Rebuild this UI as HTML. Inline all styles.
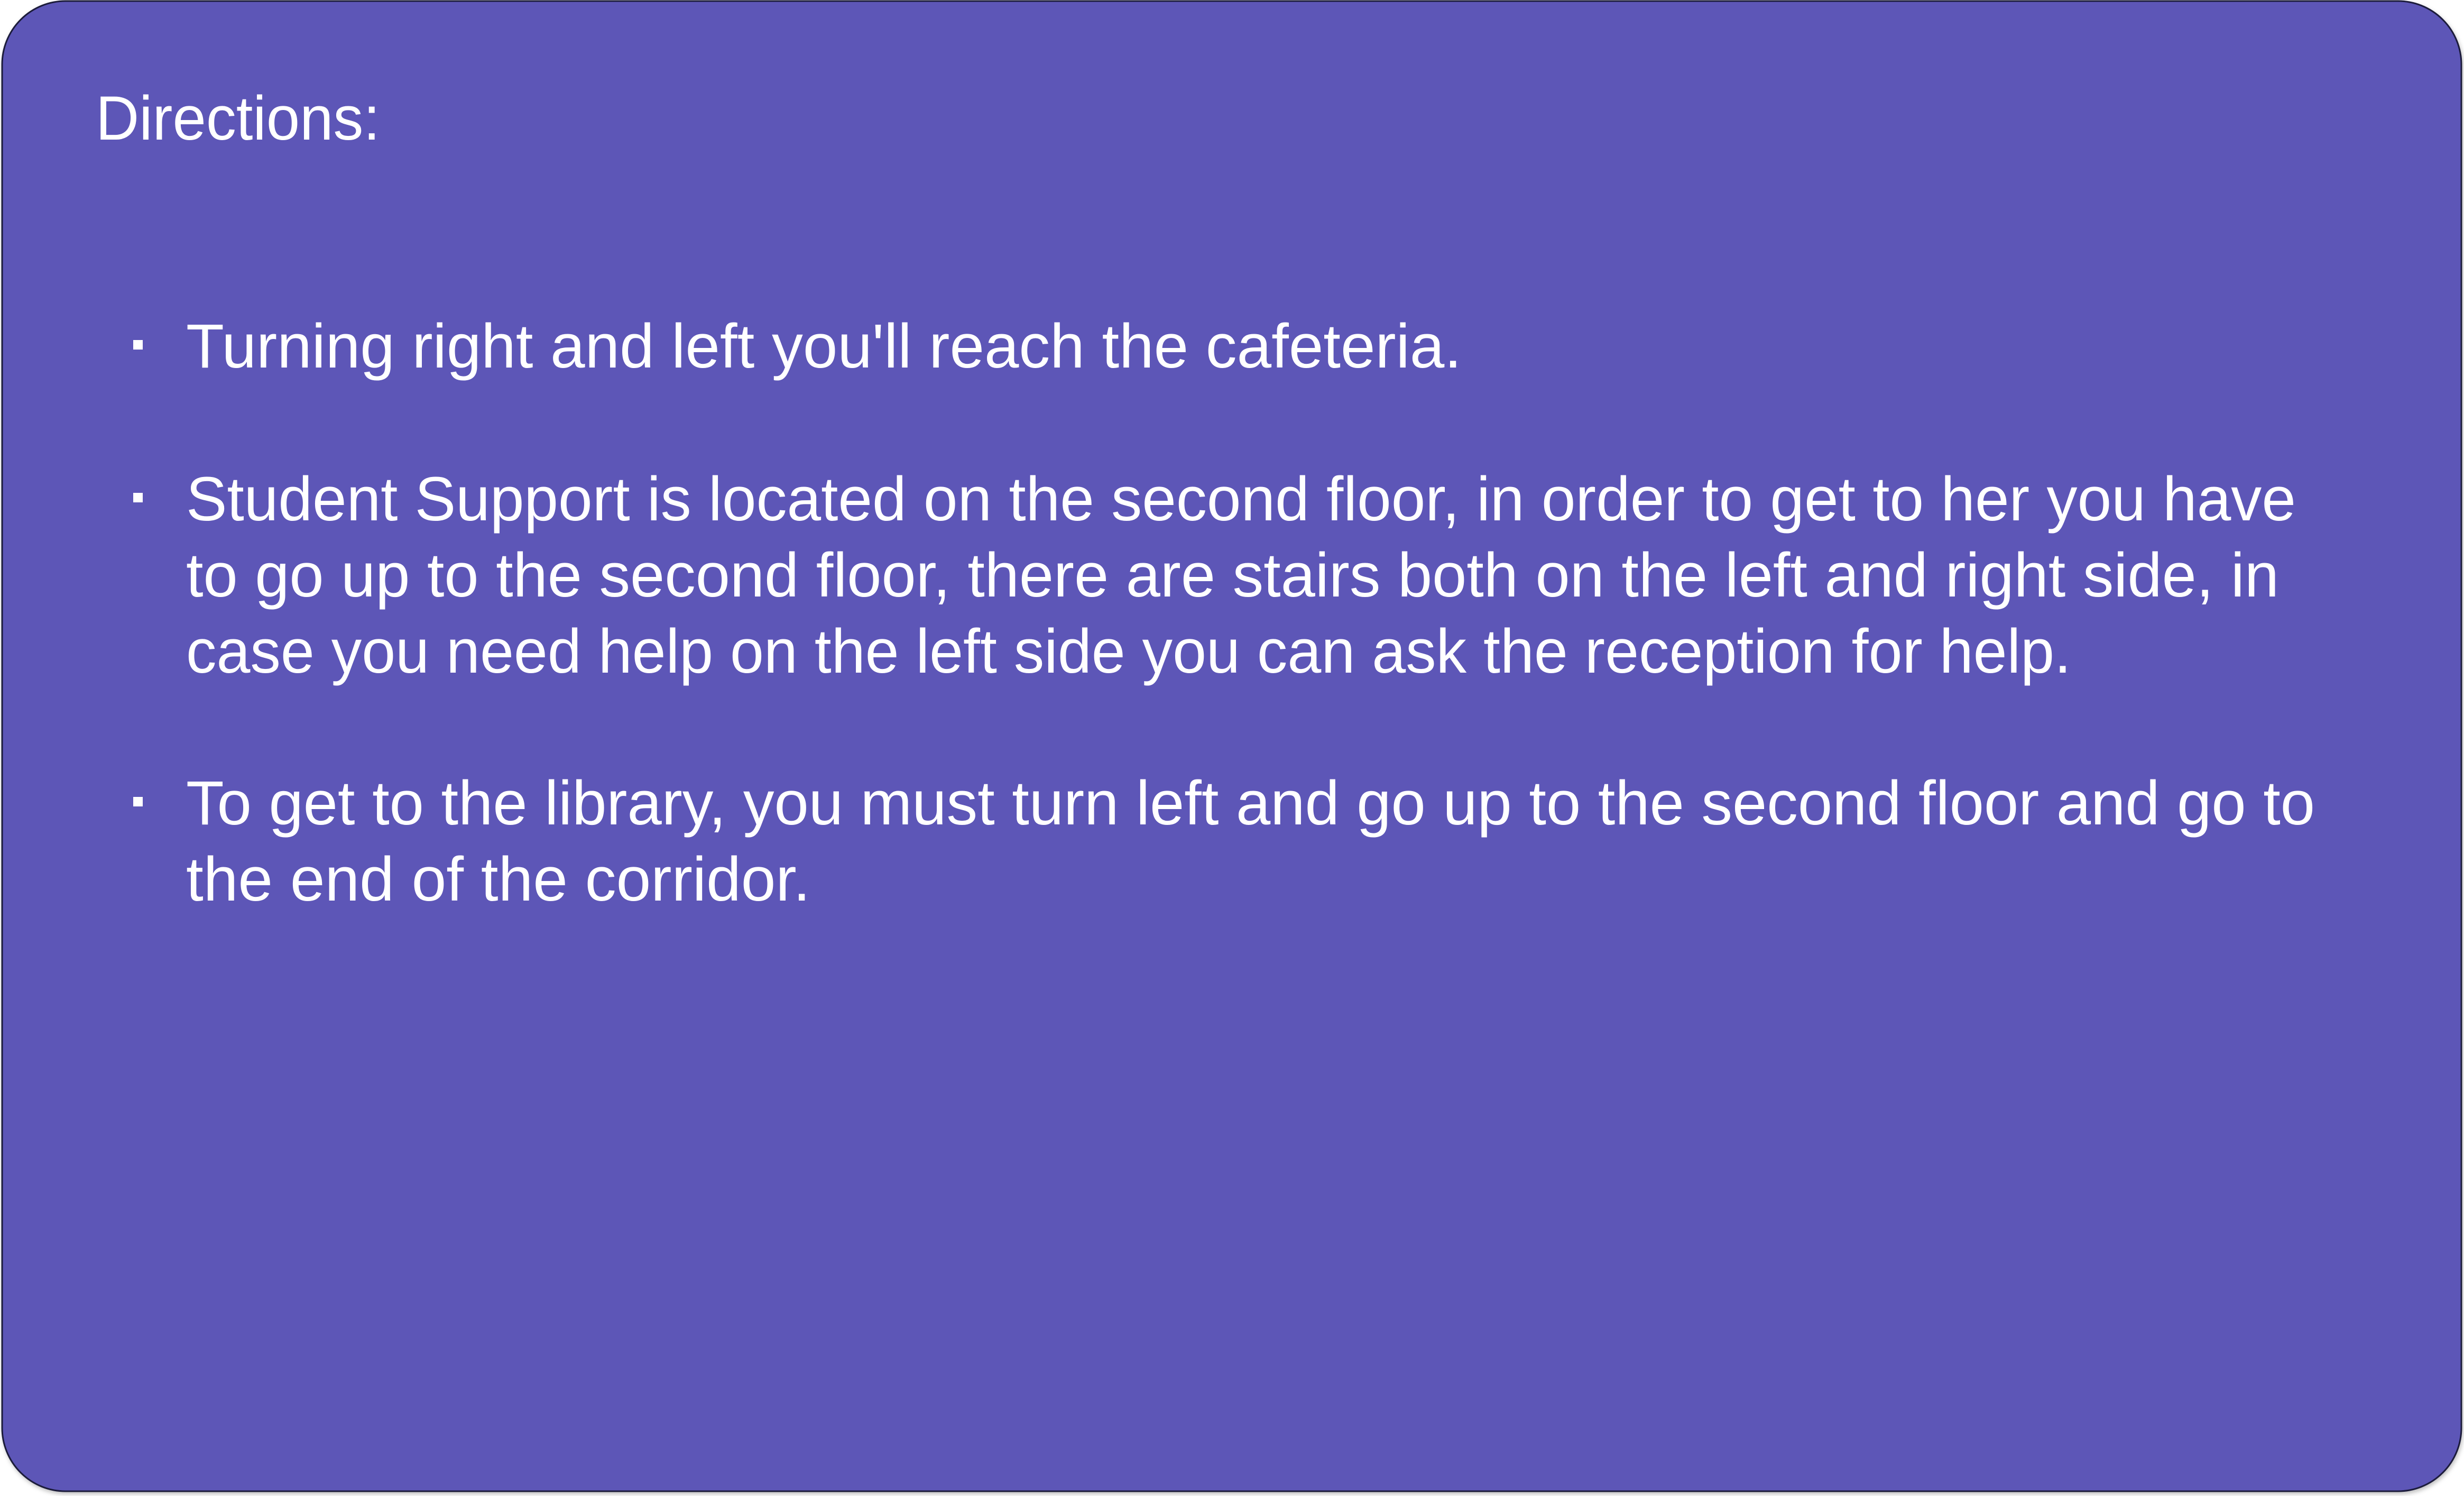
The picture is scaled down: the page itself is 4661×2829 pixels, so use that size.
<!DOCTYPE html>
<html><head><meta charset="utf-8">
<style>
html,body{margin:0;padding:0;background:#fff;}
body{width:4661px;height:2829px;overflow:hidden;position:relative;}
svg{position:absolute;left:0;top:0;}
text{font-family:"Liberation Sans",sans-serif;fill:#fff;font-size:118px;}
</style></head><body>
<svg width="4661" height="2829" viewBox="0 0 4661 2829">
<defs><filter id="sh" x="-5%" y="-5%" width="110%" height="110%"><feDropShadow dx="2" dy="4" stdDeviation="4" flood-color="#000" flood-opacity="0.25"/></filter></defs>
<rect x="4" y="2" width="4652" height="2818" rx="120" ry="120" fill="#5D57B7" stroke="#1a1a3a" stroke-width="3" filter="url(#sh)"/>
<text x="181" y="264" textLength="538" lengthAdjust="spacingAndGlyphs">Directions:</text>
<rect x="252" y="643" width="18" height="18"/>
<rect x="252" y="932" width="18" height="18"/>
<rect x="252" y="1507" width="18" height="18"/>
<g>
<rect x="252" y="643" width="18" height="18" fill="#fff"/>
<rect x="252" y="932" width="18" height="18" fill="#fff"/>
<rect x="252" y="1507" width="18" height="18" fill="#fff"/>
</g>
<text x="352" y="695" textLength="2413" lengthAdjust="spacingAndGlyphs">Turning right and left you'll reach the cafeteria.</text>
<text x="352" y="984" textLength="3991" lengthAdjust="spacingAndGlyphs">Student Support is located on the second floor, in order to get to her you have</text>
<text x="352" y="1128" textLength="3959" lengthAdjust="spacingAndGlyphs">to go up to the second floor, there are stairs both on the left and right side, in</text>
<text x="352" y="1272" textLength="3566" lengthAdjust="spacingAndGlyphs">case you need help on the left side you can ask the reception for help.</text>
<text x="352" y="1559" textLength="4027" lengthAdjust="spacingAndGlyphs">To get to the library, you must turn left and go up to the second floor and go to</text>
<text x="352" y="1703" textLength="1181" lengthAdjust="spacingAndGlyphs">the end of the corridor.</text>
</svg>
</body></html>
